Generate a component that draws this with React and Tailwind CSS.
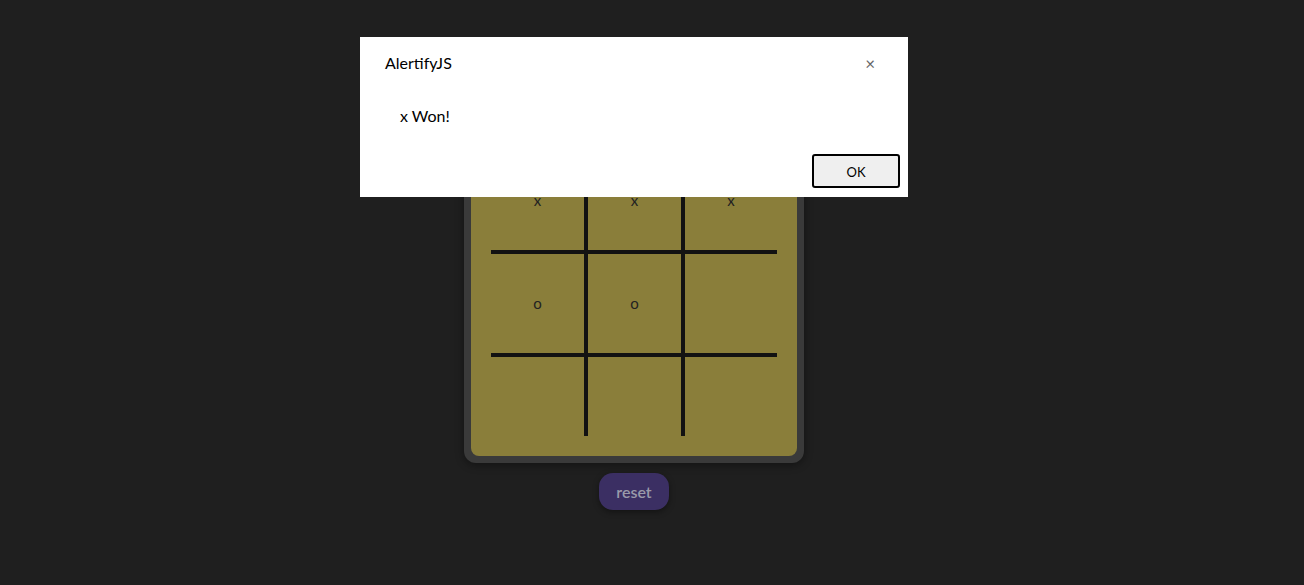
export default function App() {
  const font = { fontFamily: '"Lato", "Noto Sans", sans-serif' };
  const cell = (t) => (
    <div className="flex items-center justify-center text-[15px] leading-none text-[#222]">{t}</div>
  );
  const vline = <div className="bg-[#121212]" />;
  const hline = <div className="col-span-5 bg-[#121212]" />;
  return (
    <div className="relative min-h-[585px] w-full bg-[#1f1f1f]" style={font}>
      <div className="flex flex-col items-center pr-[36px] pt-[124px]">
        <div className="rounded-[12px] bg-[#3a3a3a] p-[7px] shadow-[0_2px_8px_rgba(0,0,0,0.4)]">
          <div className="rounded-[8px] bg-[#8a7e3a] p-[20px]">
            <div className="grid grid-cols-[93px_4px_93px_4px_92px] grid-rows-[99px_4px_99px_4px_79px]">
              {cell("x")}
              {vline}
              {cell("x")}
              {vline}
              {cell("x")}
              {hline}
              {cell("o")}
              {vline}
              {cell("o")}
              {vline}
              {cell("")}
              {hline}
              {cell("")}
              {vline}
              {cell("")}
              {vline}
              {cell("")}
            </div>
          </div>
        </div>
        <button className="mt-[10px] flex h-[37px] w-[70px] items-center justify-center rounded-[14px] bg-[#3b2f63] text-[16px] font-semibold text-[#9a9aaa] shadow-[0_2px_6px_rgba(0,0,0,0.4)]">
          reset
        </button>
      </div>

      <div className="absolute left-[360px] top-[37px] flex h-[160px] w-[548px] flex-col bg-white">
        <div className="flex h-[52px] items-center justify-between pl-[25px] pr-[33px]">
          <span className="text-[16px] text-black">AlertifyJS</span>
          <span className="text-[17px] leading-none text-[#666]">×</span>
        </div>
        <div className="flex h-[54px] items-center pl-[40px] text-[16px] text-black">x Won!</div>
        <div className="flex flex-1 items-start justify-end pr-[8px] pt-[11px]">
          <button className="flex h-[34px] w-[88px] items-center justify-center rounded-[3px] border-2 border-black bg-[#efefef] pt-[3px] text-[13px] text-black">
            OK
          </button>
        </div>
      </div>
    </div>
  );
}
